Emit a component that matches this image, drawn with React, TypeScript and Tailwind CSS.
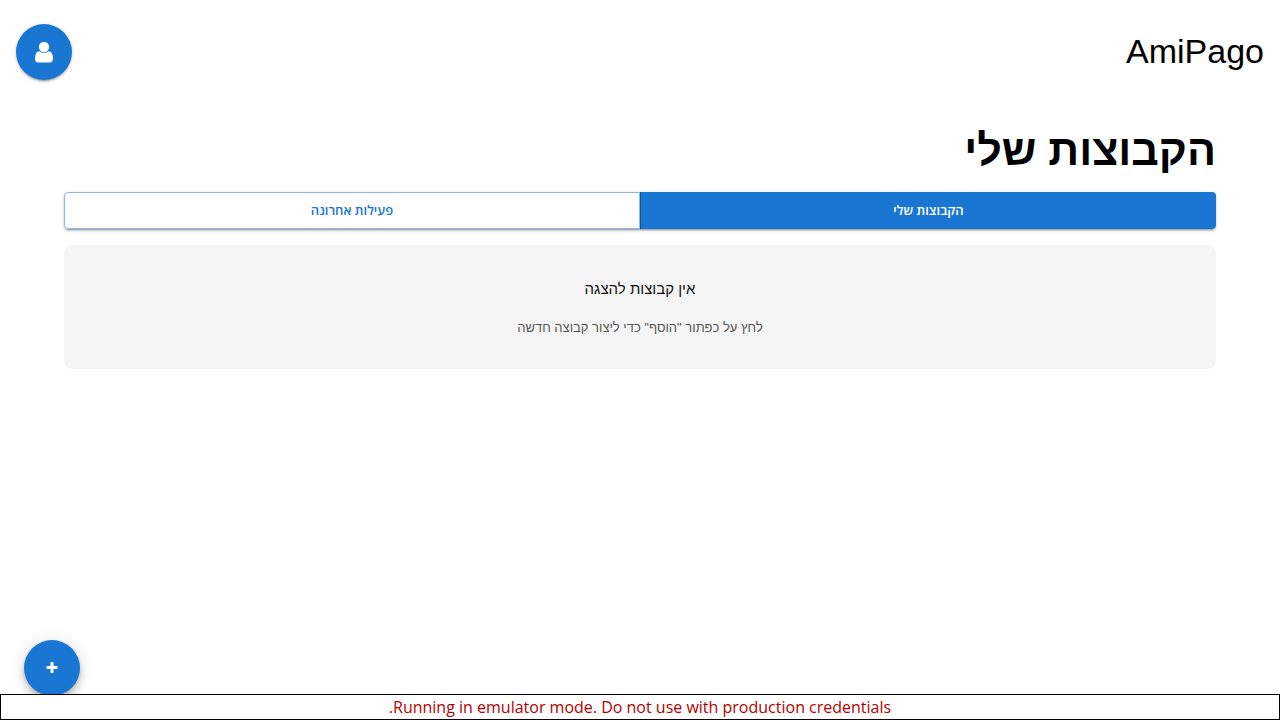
import React from "react";

function UserIcon() {
  return (
    <svg viewBox="0 0 1792 1792" className="size-6" fill="currentColor" aria-hidden="true">
      <path d="M1566 1409q0 109-62.5 187t-150.5 78h-914q-88 0-150.5-78t-62.5-187q0-85 8.5-160.5t31.5-152 58.5-131 94-89 134.5-34.5q161 128 343 128t343-128q76 0 134.5 34.5t94 89 58.5 131 31.5 152 8.5 160.5zm-286-887q0 159-112.5 271.5t-271.5 112.5-271.5-112.5-112.5-271.5 112.5-271.5 271.5-112.5 271.5 112.5 112.5 271.5z" />
    </svg>
  );
}

function PlusIcon() {
  return (
    <svg viewBox="0 0 1792 1792" className="size-3.5" fill="currentColor" aria-hidden="true">
      <path d="M1600 736v192q0 40-28 68t-68 28h-416v416q0 40-28 68t-68 28h-192q-40 0-68-28t-28-68v-416h-416q-40 0-68-28t-28-68v-192q0-40 28-68t68-28h416v-416q0-40 28-68t68-28h192q40 0 68 28t28 68v416h416q40 0 68 28t28 68z" />
    </svg>
  );
}

export default function App() {
  return (
    <div dir="rtl" className="flex min-h-screen flex-col bg-white font-['Liberation_Sans',sans-serif] text-black">
      <header className="flex items-start justify-between px-4 pt-6">
        <span className="text-[34px] leading-[54px]">AmiPago</span>
        <button type="button" aria-label="פרופיל" className="flex size-14 items-center justify-center rounded-full bg-[#1976d2] text-white shadow-[0_3px_1px_-2px_rgba(0,0,0,0.2),0_2px_2px_0_rgba(0,0,0,0.14),0_1px_5px_0_rgba(0,0,0,0.12)]">
          <UserIcon />
        </button>
      </header>
      <main className="flex flex-1 flex-col px-16 pt-10">
        <h1 className="text-[43px] leading-[60px] font-bold">הקבוצות שלי</h1>
        <div className="mt-3 grid h-[37px] grid-cols-2 rounded font-['Open_Sans',sans-serif] text-[13px] font-semibold shadow-[0_3px_1px_-2px_rgba(0,0,0,0.2),0_2px_2px_0_rgba(0,0,0,0.14),0_1px_5px_0_rgba(0,0,0,0.12)]">
          <button type="button" className="rounded-r border-l border-[#115293] bg-[#1976d2] text-white">הקבוצות שלי</button>
          <button type="button" className="rounded-l border border-[#1976d2]/50 text-[#1976d2]">פעילות אחרונה</button>
        </div>
        <section className="mt-4 rounded-lg bg-[#f5f5f5] px-8 pt-8 pb-[30px] text-center">
          <h2 className="text-[15px] leading-6 text-[#111111]">אין קבוצות להצגה</h2>
          <p className="mt-4 text-[13px] leading-[22px] text-[#555555]">לחץ על כפתור &quot;הוסף&quot; כדי ליצור קבוצה חדשה</p>
        </section>
      </main>
      <button type="button" aria-label="הוסף" className="fixed bottom-6 left-6 flex size-14 items-center justify-center rounded-full bg-[#1976d2] text-white shadow-[0_3px_5px_-1px_rgba(0,0,0,0.2),0_6px_10px_0_rgba(0,0,0,0.14),0_1px_18px_0_rgba(0,0,0,0.12)]">
        <PlusIcon />
      </button>
      <footer className="fixed inset-x-0 bottom-0 border border-black bg-white text-center font-['Open_Sans',sans-serif] text-[16px] leading-6 text-[#b50000]">
        Running in emulator mode. Do not use with production credentials.
      </footer>
    </div>
  );
}
